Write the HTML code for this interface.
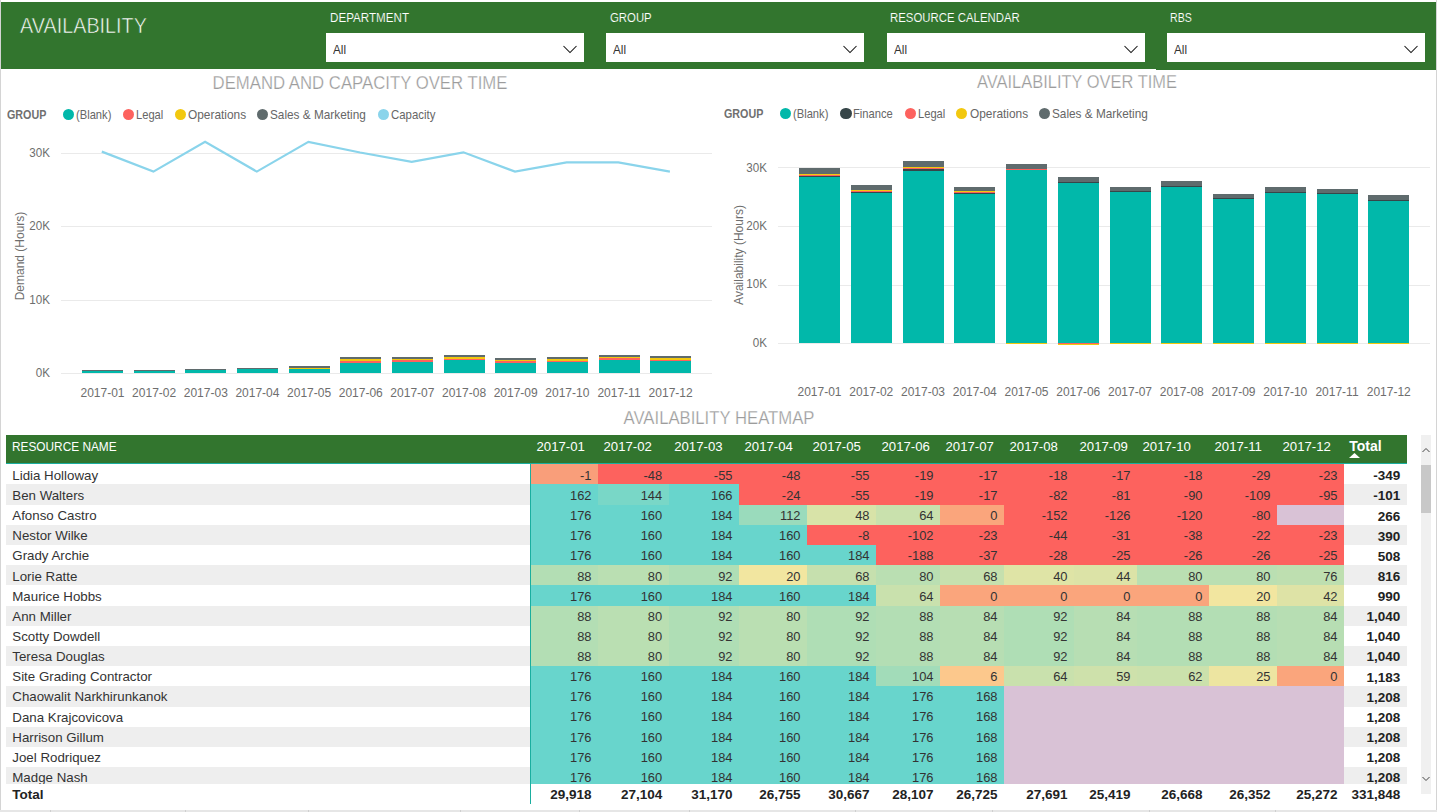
<!DOCTYPE html>
<html><head><meta charset="utf-8"><style>
html,body{margin:0;padding:0;}
body{width:1437px;height:812px;overflow:hidden;position:relative;background:#fff;font-family:"Liberation Sans", sans-serif;}
body div, body svg{position:absolute;white-space:nowrap;}
div div div{}
</style></head><body>
<div style="left:0px;top:0px;width:1px;height:812px;background:#D4D4D4;"></div>
<div style="left:1436px;top:0px;width:1px;height:812px;background:#D4D4D4;"></div>
<div style="left:0px;top:810px;width:1437px;height:2px;background:#E6E6E6;"></div>
<div style="left:49.5px;top:810px;width:1px;height:2px;background:#CFCFCF;"></div>
<div style="left:185px;top:810px;width:1px;height:2px;background:#CFCFCF;"></div>
<div style="left:308px;top:810px;width:1px;height:2px;background:#CFCFCF;"></div>
<div style="left:460px;top:810px;width:1px;height:2px;background:#CFCFCF;"></div>
<div style="left:578.5px;top:810px;width:1px;height:2px;background:#CFCFCF;"></div>
<div style="left:689px;top:810px;width:1px;height:2px;background:#CFCFCF;"></div>
<div style="left:855px;top:810px;width:1px;height:2px;background:#CFCFCF;"></div>
<div style="left:992px;top:810px;width:1px;height:2px;background:#CFCFCF;"></div>
<div style="left:1149px;top:810px;width:1px;height:2px;background:#CFCFCF;"></div>
<div style="left:1274.5px;top:810px;width:1px;height:2px;background:#CFCFCF;"></div>
<div style="left:1px;top:2px;width:1155px;height:67px;background:rgb(50,117,46);"></div>
<div style="left:1156px;top:2px;width:280px;height:68px;background:rgb(50,117,46);"></div>
<div style="top:14.67px;font-size:22.6px;line-height:22.6px;color:#fff;font-weight:normal;left:20px;transform:scaleX(0.8761);transform-origin:left top;-webkit-text-stroke:0.6px rgb(50,117,46);">AVAILABILITY</div>
<div style="top:11.74px;font-size:12px;line-height:12px;color:#fff;font-weight:normal;left:329.5px;transform:scaleX(0.9683);transform-origin:left top;-webkit-text-stroke:0.12px rgb(50,117,46);">DEPARTMENT</div>
<div style="left:326px;top:33px;width:258px;height:29px;background:#fff;"></div>
<div style="top:43.50px;font-size:12.4px;line-height:12.4px;color:#333;font-weight:normal;left:333px;transform:scaleX(0.9435);transform-origin:left top;">All</div>
<svg style="left:563px;top:45px" width="14" height="9"><polyline points="0.5,1 7,7.5 13.5,1" fill="none" stroke="#111" stroke-width="1.05"/></svg>
<div style="top:11.74px;font-size:12px;line-height:12px;color:#fff;font-weight:normal;left:609.6px;transform:scaleX(0.9475);transform-origin:left top;-webkit-text-stroke:0.12px rgb(50,117,46);">GROUP</div>
<div style="left:606px;top:33px;width:258px;height:29px;background:#fff;"></div>
<div style="top:43.50px;font-size:12.4px;line-height:12.4px;color:#333;font-weight:normal;left:613px;transform:scaleX(0.9435);transform-origin:left top;">All</div>
<svg style="left:843px;top:45px" width="14" height="9"><polyline points="0.5,1 7,7.5 13.5,1" fill="none" stroke="#111" stroke-width="1.05"/></svg>
<div style="top:11.74px;font-size:12px;line-height:12px;color:#fff;font-weight:normal;left:890px;transform:scaleX(0.9492);transform-origin:left top;-webkit-text-stroke:0.12px rgb(50,117,46);">RESOURCE CALENDAR</div>
<div style="left:887px;top:33px;width:258px;height:29px;background:#fff;"></div>
<div style="top:43.50px;font-size:12.4px;line-height:12.4px;color:#333;font-weight:normal;left:894px;transform:scaleX(0.9435);transform-origin:left top;">All</div>
<svg style="left:1124px;top:45px" width="14" height="9"><polyline points="0.5,1 7,7.5 13.5,1" fill="none" stroke="#111" stroke-width="1.05"/></svg>
<div style="top:11.74px;font-size:12px;line-height:12px;color:#fff;font-weight:normal;left:1170.4px;transform:scaleX(0.8833);transform-origin:left top;-webkit-text-stroke:0.12px rgb(50,117,46);">RBS</div>
<div style="left:1167px;top:33px;width:258px;height:29px;background:#fff;"></div>
<div style="top:43.50px;font-size:12.4px;line-height:12.4px;color:#333;font-weight:normal;left:1174px;transform:scaleX(0.9435);transform-origin:left top;">All</div>
<svg style="left:1404px;top:45px" width="14" height="9"><polyline points="0.5,1 7,7.5 13.5,1" fill="none" stroke="#111" stroke-width="1.05"/></svg>
<div style="top:74.02px;font-size:18.4px;line-height:18.4px;color:#9C9C9C;font-weight:normal;left:159.5px;width:400px;text-align:center;transform:scaleX(0.9103);transform-origin:center top;-webkit-text-stroke:0.25px #fff;">DEMAND AND CAPACITY OVER TIME</div>
<div style="top:108.50px;font-size:12.4px;line-height:12.4px;color:#707070;font-weight:bold;left:6.7px;transform:scaleX(0.8661);transform-origin:left top;">GROUP</div>
<div style="left:62.8px;top:109.3px;width:11.2px;height:11.2px;border-radius:50%;background:#01B8AA"></div>
<div style="top:108.90px;font-size:12.4px;line-height:12.4px;color:#666;font-weight:normal;left:75.8px;transform:scaleX(0.9016);transform-origin:left top;">(Blank)</div>
<div style="left:122.9px;top:109.3px;width:11.2px;height:11.2px;border-radius:50%;background:#FD625E"></div>
<div style="top:108.90px;font-size:12.4px;line-height:12.4px;color:#666;font-weight:normal;left:136px;transform:scaleX(0.9000);transform-origin:left top;">Legal</div>
<div style="left:174.7px;top:109.3px;width:11.2px;height:11.2px;border-radius:50%;background:#F2C80F"></div>
<div style="top:108.90px;font-size:12.4px;line-height:12.4px;color:#666;font-weight:normal;left:187.7px;transform:scaleX(0.9581);transform-origin:left top;">Operations</div>
<div style="left:257.2px;top:109.3px;width:11.2px;height:11.2px;border-radius:50%;background:#5F6B6D"></div>
<div style="top:108.90px;font-size:12.4px;line-height:12.4px;color:#666;font-weight:normal;left:270.2px;transform:scaleX(0.9524);transform-origin:left top;">Sales &amp; Marketing</div>
<div style="left:377.8px;top:109.3px;width:11.2px;height:11.2px;border-radius:50%;background:#8AD4EB"></div>
<div style="top:108.90px;font-size:12.4px;line-height:12.4px;color:#666;font-weight:normal;left:390.8px;transform:scaleX(0.9202);transform-origin:left top;">Capacity</div>
<div style="left:61px;top:153px;width:651px;height:1px;background:#EAEAEA;"></div>
<div style="top:147.42px;font-size:12.5px;line-height:12.5px;color:#6E6E6E;font-weight:normal;left:10px;width:40px;text-align:right;transform:scaleX(0.9300);transform-origin:right top;">30K</div>
<div style="left:61px;top:226px;width:651px;height:1px;background:#EAEAEA;"></div>
<div style="top:220.42px;font-size:12.5px;line-height:12.5px;color:#6E6E6E;font-weight:normal;left:10px;width:40px;text-align:right;transform:scaleX(0.9300);transform-origin:right top;">20K</div>
<div style="left:61px;top:300px;width:651px;height:1px;background:#EAEAEA;"></div>
<div style="top:293.82px;font-size:12.5px;line-height:12.5px;color:#6E6E6E;font-weight:normal;left:10px;width:40px;text-align:right;transform:scaleX(0.9300);transform-origin:right top;">10K</div>
<div style="left:61px;top:373px;width:651px;height:1px;background:#EAEAEA;"></div>
<div style="top:366.62px;font-size:12.5px;line-height:12.5px;color:#6E6E6E;font-weight:normal;left:10px;width:40px;text-align:right;transform:scaleX(0.9300);transform-origin:right top;">0K</div>
<div style="left:20px;top:256px;width:0;height:0"><div style="position:absolute;left:-60px;top:-7px;width:120px;text-align:center;font-size:12px;line-height:14px;color:#6E6E6E;transform:rotate(-90deg)">Demand (Hours)</div></div>
<div style="left:82.00px;top:370px;width:41px;height:1.00px;background:#5F6B6D;"></div>
<div style="left:82.00px;top:371px;width:41px;height:2.00px;background:#01B8AA;"></div>
<div style="top:386.54px;font-size:12px;line-height:12px;color:#6E6E6E;font-weight:normal;left:72.5px;width:60px;text-align:center;">2017-01</div>
<div style="left:133.65px;top:370px;width:41px;height:1.00px;background:#5F6B6D;"></div>
<div style="left:133.65px;top:371px;width:41px;height:2.00px;background:#01B8AA;"></div>
<div style="top:386.54px;font-size:12px;line-height:12px;color:#6E6E6E;font-weight:normal;left:124.15px;width:60px;text-align:center;">2017-02</div>
<div style="left:185.30px;top:369px;width:41px;height:1.00px;background:#5F6B6D;"></div>
<div style="left:185.30px;top:370px;width:41px;height:3.00px;background:#01B8AA;"></div>
<div style="top:386.54px;font-size:12px;line-height:12px;color:#6E6E6E;font-weight:normal;left:175.8px;width:60px;text-align:center;">2017-03</div>
<div style="left:236.95px;top:368px;width:41px;height:1.00px;background:#5F6B6D;"></div>
<div style="left:236.95px;top:369px;width:41px;height:4.00px;background:#01B8AA;"></div>
<div style="top:386.54px;font-size:12px;line-height:12px;color:#6E6E6E;font-weight:normal;left:227.45px;width:60px;text-align:center;">2017-04</div>
<div style="left:288.60px;top:366px;width:41px;height:1.70px;background:#5F6B6D;"></div>
<div style="left:288.60px;top:367.7px;width:41px;height:1.30px;background:#F2C80F;"></div>
<div style="left:288.60px;top:369px;width:41px;height:4.00px;background:#01B8AA;"></div>
<div style="top:386.54px;font-size:12px;line-height:12px;color:#6E6E6E;font-weight:normal;left:279.1px;width:60px;text-align:center;">2017-05</div>
<div style="left:340.25px;top:357px;width:41px;height:2.00px;background:#5F6B6D;"></div>
<div style="left:340.25px;top:359px;width:41px;height:2.00px;background:#F2C80F;"></div>
<div style="left:340.25px;top:361px;width:41px;height:2.00px;background:#FD625E;"></div>
<div style="left:340.25px;top:363px;width:41px;height:10.00px;background:#01B8AA;"></div>
<div style="top:386.54px;font-size:12px;line-height:12px;color:#6E6E6E;font-weight:normal;left:330.75px;width:60px;text-align:center;">2017-06</div>
<div style="left:391.90px;top:357px;width:41px;height:2.00px;background:#5F6B6D;"></div>
<div style="left:391.90px;top:359px;width:41px;height:1.00px;background:#F2C80F;"></div>
<div style="left:391.90px;top:360px;width:41px;height:2.00px;background:#FD625E;"></div>
<div style="left:391.90px;top:362px;width:41px;height:11.00px;background:#01B8AA;"></div>
<div style="top:386.54px;font-size:12px;line-height:12px;color:#6E6E6E;font-weight:normal;left:382.4px;width:60px;text-align:center;">2017-07</div>
<div style="left:443.55px;top:355px;width:41px;height:2.00px;background:#5F6B6D;"></div>
<div style="left:443.55px;top:357px;width:41px;height:2.00px;background:#F2C80F;"></div>
<div style="left:443.55px;top:359px;width:41px;height:1.00px;background:#FD625E;"></div>
<div style="left:443.55px;top:360px;width:41px;height:13.00px;background:#01B8AA;"></div>
<div style="top:386.54px;font-size:12px;line-height:12px;color:#6E6E6E;font-weight:normal;left:434.05px;width:60px;text-align:center;">2017-08</div>
<div style="left:495.20px;top:358px;width:41px;height:2.00px;background:#5F6B6D;"></div>
<div style="left:495.20px;top:360px;width:41px;height:1.00px;background:#F2C80F;"></div>
<div style="left:495.20px;top:361px;width:41px;height:2.00px;background:#FD625E;"></div>
<div style="left:495.20px;top:363px;width:41px;height:10.00px;background:#01B8AA;"></div>
<div style="top:386.54px;font-size:12px;line-height:12px;color:#6E6E6E;font-weight:normal;left:485.70000000000005px;width:60px;text-align:center;">2017-09</div>
<div style="left:546.85px;top:357px;width:41px;height:2.00px;background:#5F6B6D;"></div>
<div style="left:546.85px;top:359px;width:41px;height:2.00px;background:#F2C80F;"></div>
<div style="left:546.85px;top:361px;width:41px;height:1.00px;background:#FD625E;"></div>
<div style="left:546.85px;top:362px;width:41px;height:11.00px;background:#01B8AA;"></div>
<div style="top:386.54px;font-size:12px;line-height:12px;color:#6E6E6E;font-weight:normal;left:537.3499999999999px;width:60px;text-align:center;">2017-10</div>
<div style="left:598.50px;top:355px;width:41px;height:2.00px;background:#5F6B6D;"></div>
<div style="left:598.50px;top:357px;width:41px;height:1.00px;background:#F2C80F;"></div>
<div style="left:598.50px;top:358px;width:41px;height:2.00px;background:#FD625E;"></div>
<div style="left:598.50px;top:360px;width:41px;height:13.00px;background:#01B8AA;"></div>
<div style="top:386.54px;font-size:12px;line-height:12px;color:#6E6E6E;font-weight:normal;left:589.0px;width:60px;text-align:center;">2017-11</div>
<div style="left:650.15px;top:356px;width:41px;height:2.00px;background:#5F6B6D;"></div>
<div style="left:650.15px;top:358px;width:41px;height:2.00px;background:#F2C80F;"></div>
<div style="left:650.15px;top:360px;width:41px;height:1.00px;background:#FD625E;"></div>
<div style="left:650.15px;top:361px;width:41px;height:12.00px;background:#01B8AA;"></div>
<div style="top:386.54px;font-size:12px;line-height:12px;color:#6E6E6E;font-weight:normal;left:640.65px;width:60px;text-align:center;">2017-12</div>
<svg style="left:0;top:0" width="720" height="400"><polyline points="101.8,151.6 153.4,171.6 205.1,141.8 256.8,171.6 308.4,141.8 360.1,152.5 411.7,161.8 463.4,152.3 515.0,171.6 566.6,162.3 618.3,162.3 669.9,171.6" fill="none" stroke="#8AD4EB" stroke-width="2.2" stroke-linejoin="miter"/></svg>
<div style="top:73.39px;font-size:18.2px;line-height:18.2px;color:#9C9C9C;font-weight:normal;left:877.3px;width:400px;text-align:center;transform:scaleX(0.9044);transform-origin:center top;-webkit-text-stroke:0.25px #fff;">AVAILABILITY OVER TIME</div>
<div style="top:108.00px;font-size:12.4px;line-height:12.4px;color:#707070;font-weight:bold;left:723.8px;transform:scaleX(0.8661);transform-origin:left top;">GROUP</div>
<div style="left:780.3px;top:108.3px;width:11.2px;height:11.2px;border-radius:50%;background:#01B8AA"></div>
<div style="top:107.90px;font-size:12.4px;line-height:12.4px;color:#666;font-weight:normal;left:793.3px;transform:scaleX(0.9016);transform-origin:left top;">(Blank)</div>
<div style="left:840.4px;top:108.3px;width:11.2px;height:11.2px;border-radius:50%;background:#374649"></div>
<div style="top:107.90px;font-size:12.4px;line-height:12.4px;color:#666;font-weight:normal;left:853.4px;transform:scaleX(0.9024);transform-origin:left top;">Finance</div>
<div style="left:904.5px;top:108.3px;width:11.2px;height:11.2px;border-radius:50%;background:#FD625E"></div>
<div style="top:107.90px;font-size:12.4px;line-height:12.4px;color:#666;font-weight:normal;left:917.5px;transform:scaleX(0.9000);transform-origin:left top;">Legal</div>
<div style="left:955.6px;top:108.3px;width:11.2px;height:11.2px;border-radius:50%;background:#F2C80F"></div>
<div style="top:107.90px;font-size:12.4px;line-height:12.4px;color:#666;font-weight:normal;left:970px;transform:scaleX(0.9581);transform-origin:left top;">Operations</div>
<div style="left:1039px;top:108.3px;width:11.2px;height:11.2px;border-radius:50%;background:#5F6B6D"></div>
<div style="top:107.90px;font-size:12.4px;line-height:12.4px;color:#666;font-weight:normal;left:1052px;transform:scaleX(0.9524);transform-origin:left top;">Sales &amp; Marketing</div>
<div style="left:778px;top:167px;width:652px;height:1px;background:#EAEAEA;"></div>
<div style="top:161.62px;font-size:12.5px;line-height:12.5px;color:#6E6E6E;font-weight:normal;left:726.7px;width:40px;text-align:right;transform:scaleX(0.9300);transform-origin:right top;">30K</div>
<div style="left:778px;top:226px;width:652px;height:1px;background:#EAEAEA;"></div>
<div style="top:219.52px;font-size:12.5px;line-height:12.5px;color:#6E6E6E;font-weight:normal;left:726.7px;width:40px;text-align:right;transform:scaleX(0.9300);transform-origin:right top;">20K</div>
<div style="left:778px;top:285px;width:652px;height:1px;background:#EAEAEA;"></div>
<div style="top:278.32px;font-size:12.5px;line-height:12.5px;color:#6E6E6E;font-weight:normal;left:726.7px;width:40px;text-align:right;transform:scaleX(0.9300);transform-origin:right top;">10K</div>
<div style="left:778px;top:343px;width:652px;height:1px;background:#EAEAEA;"></div>
<div style="top:337.12px;font-size:12.5px;line-height:12.5px;color:#6E6E6E;font-weight:normal;left:726.7px;width:40px;text-align:right;transform:scaleX(0.9300);transform-origin:right top;">0K</div>
<div style="left:738.5px;top:255px;width:0;height:0"><div style="position:absolute;left:-70px;top:-7px;width:140px;text-align:center;font-size:12px;line-height:14px;color:#6E6E6E;transform:rotate(-90deg)">Availability (Hours)</div></div>
<div style="left:799.00px;top:168px;width:41px;height:5.70px;background:#5F6B6D;"></div>
<div style="left:799.00px;top:173.7px;width:41px;height:1.30px;background:#F2C80F;"></div>
<div style="left:799.00px;top:175px;width:41px;height:1.00px;background:#FD625E;"></div>
<div style="left:799.00px;top:176px;width:41px;height:1.00px;background:#374649;"></div>
<div style="left:799.00px;top:177px;width:41px;height:166.00px;background:#01B8AA;"></div>
<div style="top:385.84px;font-size:12px;line-height:12px;color:#6E6E6E;font-weight:normal;left:789.5px;width:60px;text-align:center;">2017-01</div>
<div style="left:850.75px;top:185px;width:41px;height:4.80px;background:#5F6B6D;"></div>
<div style="left:850.75px;top:189.8px;width:41px;height:1.20px;background:#F2C80F;"></div>
<div style="left:850.75px;top:191px;width:41px;height:1.00px;background:#FD625E;"></div>
<div style="left:850.75px;top:192px;width:41px;height:1.00px;background:#374649;"></div>
<div style="left:850.75px;top:193px;width:41px;height:150.00px;background:#01B8AA;"></div>
<div style="top:385.84px;font-size:12px;line-height:12px;color:#6E6E6E;font-weight:normal;left:841.25px;width:60px;text-align:center;">2017-02</div>
<div style="left:902.50px;top:161px;width:41px;height:5.80px;background:#5F6B6D;"></div>
<div style="left:902.50px;top:166.8px;width:41px;height:1.20px;background:#F2C80F;"></div>
<div style="left:902.50px;top:168px;width:41px;height:1.00px;background:#FD625E;"></div>
<div style="left:902.50px;top:169px;width:41px;height:2.00px;background:#374649;"></div>
<div style="left:902.50px;top:171px;width:41px;height:172.00px;background:#01B8AA;"></div>
<div style="top:385.84px;font-size:12px;line-height:12px;color:#6E6E6E;font-weight:normal;left:893.0px;width:60px;text-align:center;">2017-03</div>
<div style="left:954.25px;top:187px;width:41px;height:3.60px;background:#5F6B6D;"></div>
<div style="left:954.25px;top:190.6px;width:41px;height:1.20px;background:#F2C80F;"></div>
<div style="left:954.25px;top:191.8px;width:41px;height:1.20px;background:#FD625E;"></div>
<div style="left:954.25px;top:193px;width:41px;height:1.00px;background:#374649;"></div>
<div style="left:954.25px;top:194px;width:41px;height:149.00px;background:#01B8AA;"></div>
<div style="top:385.84px;font-size:12px;line-height:12px;color:#6E6E6E;font-weight:normal;left:944.75px;width:60px;text-align:center;">2017-04</div>
<div style="left:1006.00px;top:164px;width:41px;height:5.00px;background:#5F6B6D;"></div>
<div style="left:1006.00px;top:169px;width:41px;height:1.00px;background:#FD625E;"></div>
<div style="left:1006.00px;top:170px;width:41px;height:173.00px;background:#01B8AA;"></div>
<div style="left:1006.00px;top:343px;width:41px;height:1.00px;background:#F2C80F;"></div>
<div style="top:385.84px;font-size:12px;line-height:12px;color:#6E6E6E;font-weight:normal;left:996.5px;width:60px;text-align:center;">2017-05</div>
<div style="left:1057.75px;top:177px;width:41px;height:5.20px;background:#5F6B6D;"></div>
<div style="left:1057.75px;top:182.2px;width:41px;height:0.80px;background:#374649;"></div>
<div style="left:1057.75px;top:183px;width:41px;height:160.00px;background:#01B8AA;"></div>
<div style="left:1057.75px;top:343px;width:41px;height:1.00px;background:#FD625E;"></div>
<div style="left:1057.75px;top:344px;width:41px;height:1.00px;background:#F2C80F;"></div>
<div style="top:385.84px;font-size:12px;line-height:12px;color:#6E6E6E;font-weight:normal;left:1048.25px;width:60px;text-align:center;">2017-06</div>
<div style="left:1109.50px;top:187px;width:41px;height:4.00px;background:#5F6B6D;"></div>
<div style="left:1109.50px;top:191px;width:41px;height:1.00px;background:#374649;"></div>
<div style="left:1109.50px;top:192px;width:41px;height:151.00px;background:#01B8AA;"></div>
<div style="left:1109.50px;top:343px;width:41px;height:1.00px;background:#F2C80F;"></div>
<div style="top:385.84px;font-size:12px;line-height:12px;color:#6E6E6E;font-weight:normal;left:1100.0px;width:60px;text-align:center;">2017-07</div>
<div style="left:1161.25px;top:181px;width:41px;height:5.00px;background:#5F6B6D;"></div>
<div style="left:1161.25px;top:186px;width:41px;height:1.00px;background:#374649;"></div>
<div style="left:1161.25px;top:187px;width:41px;height:156.00px;background:#01B8AA;"></div>
<div style="left:1161.25px;top:343px;width:41px;height:1.00px;background:#F2C80F;"></div>
<div style="top:385.84px;font-size:12px;line-height:12px;color:#6E6E6E;font-weight:normal;left:1151.75px;width:60px;text-align:center;">2017-08</div>
<div style="left:1213.00px;top:194px;width:41px;height:4.00px;background:#5F6B6D;"></div>
<div style="left:1213.00px;top:198px;width:41px;height:1.00px;background:#374649;"></div>
<div style="left:1213.00px;top:199px;width:41px;height:144.00px;background:#01B8AA;"></div>
<div style="left:1213.00px;top:343px;width:41px;height:1.00px;background:#F2C80F;"></div>
<div style="top:385.84px;font-size:12px;line-height:12px;color:#6E6E6E;font-weight:normal;left:1203.5px;width:60px;text-align:center;">2017-09</div>
<div style="left:1264.75px;top:187px;width:41px;height:5.00px;background:#5F6B6D;"></div>
<div style="left:1264.75px;top:192px;width:41px;height:1.00px;background:#374649;"></div>
<div style="left:1264.75px;top:193px;width:41px;height:150.00px;background:#01B8AA;"></div>
<div style="left:1264.75px;top:343px;width:41px;height:1.00px;background:#F2C80F;"></div>
<div style="top:385.84px;font-size:12px;line-height:12px;color:#6E6E6E;font-weight:normal;left:1255.25px;width:60px;text-align:center;">2017-10</div>
<div style="left:1316.50px;top:189px;width:41px;height:4.00px;background:#5F6B6D;"></div>
<div style="left:1316.50px;top:193px;width:41px;height:1.00px;background:#374649;"></div>
<div style="left:1316.50px;top:194px;width:41px;height:149.00px;background:#01B8AA;"></div>
<div style="left:1316.50px;top:343px;width:41px;height:1.00px;background:#F2C80F;"></div>
<div style="top:385.84px;font-size:12px;line-height:12px;color:#6E6E6E;font-weight:normal;left:1307.0px;width:60px;text-align:center;">2017-11</div>
<div style="left:1368.25px;top:195px;width:41px;height:5.00px;background:#5F6B6D;"></div>
<div style="left:1368.25px;top:200px;width:41px;height:1.00px;background:#374649;"></div>
<div style="left:1368.25px;top:201px;width:41px;height:142.00px;background:#01B8AA;"></div>
<div style="left:1368.25px;top:343px;width:41px;height:1.00px;background:#F2C80F;"></div>
<div style="top:385.84px;font-size:12px;line-height:12px;color:#6E6E6E;font-weight:normal;left:1358.75px;width:60px;text-align:center;">2017-12</div>
<div style="top:410.15px;font-size:17.9px;line-height:17.9px;color:#9C9C9C;font-weight:normal;left:518.5px;width:400px;text-align:center;transform:scaleX(0.9335);transform-origin:center top;-webkit-text-stroke:0.25px #fff;">AVAILABILITY HEATMAP</div>
<div style="left:6px;top:435px;width:1401px;height:28px;background:rgb(50,117,46);"></div>
<div style="left:6px;top:463px;width:1401px;height:1px;background:#1AAE9F;"></div>
<div style="top:441.27px;font-size:12.2px;line-height:12.2px;color:#fff;font-weight:normal;left:12.3px;transform:scaleX(0.9713);transform-origin:left top;">RESOURCE NAME</div>
<div style="top:439.63px;font-size:13.19px;line-height:13.19px;color:#fff;font-weight:normal;left:536.5px;">2017-01</div>
<div style="top:439.63px;font-size:13.19px;line-height:13.19px;color:#fff;font-weight:normal;left:603.5px;">2017-02</div>
<div style="top:439.63px;font-size:13.19px;line-height:13.19px;color:#fff;font-weight:normal;left:674.2px;">2017-03</div>
<div style="top:439.63px;font-size:13.19px;line-height:13.19px;color:#fff;font-weight:normal;left:744.5px;">2017-04</div>
<div style="top:439.63px;font-size:13.19px;line-height:13.19px;color:#fff;font-weight:normal;left:812.5px;">2017-05</div>
<div style="top:439.63px;font-size:13.19px;line-height:13.19px;color:#fff;font-weight:normal;left:881.5px;">2017-06</div>
<div style="top:439.63px;font-size:13.19px;line-height:13.19px;color:#fff;font-weight:normal;left:945.5px;">2017-07</div>
<div style="top:439.63px;font-size:13.19px;line-height:13.19px;color:#fff;font-weight:normal;left:1009.5px;">2017-08</div>
<div style="top:439.63px;font-size:13.19px;line-height:13.19px;color:#fff;font-weight:normal;left:1079.5px;">2017-09</div>
<div style="top:439.63px;font-size:13.19px;line-height:13.19px;color:#fff;font-weight:normal;left:1142.5px;">2017-10</div>
<div style="top:439.63px;font-size:13.19px;line-height:13.19px;color:#fff;font-weight:normal;left:1214.5px;">2017-11</div>
<div style="top:439.63px;font-size:13.19px;line-height:13.19px;color:#fff;font-weight:normal;left:1282.5px;">2017-12</div>
<div style="top:438.95px;font-size:14px;line-height:14px;color:#fff;font-weight:bold;left:1349.2px;">Total</div>
<svg style="left:1349px;top:453px" width="11" height="5"><polygon points="0,5 5.5,0 11,5" fill="#fff"/></svg>
<div style="left:0;top:464px;width:1437px;height:320px;overflow:hidden">
<div style="left:6px;top:0px;width:525px;height:20px;background:#fff;"></div>
<div style="left:1344px;top:0px;width:63px;height:20px;background:#fff;"></div>
<div style="top:4.94px;font-size:13.3px;line-height:13.3px;color:#333;font-weight:normal;left:12.3px;">Lidia Holloway</div>
<div style="left:531.00px;top:0px;width:67.00px;height:20px;background:rgb(249, 158, 122);"></div>
<div style="top:5.88px;font-size:12.9px;line-height:12.9px;color:#333;font-weight:normal;left:531.5px;width:60px;text-align:right;">-1</div>
<div style="left:598.00px;top:0px;width:70.70px;height:20px;background:rgb(253, 98, 94);"></div>
<div style="top:5.88px;font-size:12.9px;line-height:12.9px;color:#333;font-weight:normal;left:602.2px;width:60px;text-align:right;">-48</div>
<div style="left:668.70px;top:0px;width:70.30px;height:20px;background:rgb(253, 98, 94);"></div>
<div style="top:5.88px;font-size:12.9px;line-height:12.9px;color:#333;font-weight:normal;left:672.5px;width:60px;text-align:right;">-55</div>
<div style="left:739.00px;top:0px;width:68.00px;height:20px;background:rgb(253, 98, 94);"></div>
<div style="top:5.88px;font-size:12.9px;line-height:12.9px;color:#333;font-weight:normal;left:740.5px;width:60px;text-align:right;">-48</div>
<div style="left:807.00px;top:0px;width:69.00px;height:20px;background:rgb(253, 98, 94);"></div>
<div style="top:5.88px;font-size:12.9px;line-height:12.9px;color:#333;font-weight:normal;left:809.5px;width:60px;text-align:right;">-55</div>
<div style="left:876.00px;top:0px;width:64.00px;height:20px;background:rgb(253, 98, 94);"></div>
<div style="top:5.88px;font-size:12.9px;line-height:12.9px;color:#333;font-weight:normal;left:873.5px;width:60px;text-align:right;">-19</div>
<div style="left:940.00px;top:0px;width:64.00px;height:20px;background:rgb(253, 98, 94);"></div>
<div style="top:5.88px;font-size:12.9px;line-height:12.9px;color:#333;font-weight:normal;left:937.5px;width:60px;text-align:right;">-17</div>
<div style="left:1004.00px;top:0px;width:70.00px;height:20px;background:rgb(253, 98, 94);"></div>
<div style="top:5.88px;font-size:12.9px;line-height:12.9px;color:#333;font-weight:normal;left:1007.5px;width:60px;text-align:right;">-18</div>
<div style="left:1074.00px;top:0px;width:63.00px;height:20px;background:rgb(253, 98, 94);"></div>
<div style="top:5.88px;font-size:12.9px;line-height:12.9px;color:#333;font-weight:normal;left:1070.5px;width:60px;text-align:right;">-17</div>
<div style="left:1137.00px;top:0px;width:72.00px;height:20px;background:rgb(253, 98, 94);"></div>
<div style="top:5.88px;font-size:12.9px;line-height:12.9px;color:#333;font-weight:normal;left:1142.5px;width:60px;text-align:right;">-18</div>
<div style="left:1209.00px;top:0px;width:68.00px;height:20px;background:rgb(253, 98, 94);"></div>
<div style="top:5.88px;font-size:12.9px;line-height:12.9px;color:#333;font-weight:normal;left:1210.5px;width:60px;text-align:right;">-29</div>
<div style="left:1277.00px;top:0px;width:67.00px;height:20px;background:rgb(253, 98, 94);"></div>
<div style="top:5.88px;font-size:12.9px;line-height:12.9px;color:#333;font-weight:normal;left:1277.5px;width:60px;text-align:right;">-23</div>
<div style="top:5.27px;font-size:13.5px;line-height:13.5px;color:#222;font-weight:bold;left:1340.2px;width:60px;text-align:right;">-349</div>
<div style="left:6px;top:20px;width:525px;height:21px;background:#EEEEEE;"></div>
<div style="left:1344px;top:20px;width:63px;height:21px;background:#EEEEEE;"></div>
<div style="top:25.07px;font-size:13.3px;line-height:13.3px;color:#333;font-weight:normal;left:12.3px;">Ben Walters</div>
<div style="left:531.00px;top:20px;width:67.00px;height:21px;background:rgb(104, 213, 204);"></div>
<div style="top:26.01px;font-size:12.9px;line-height:12.9px;color:#333;font-weight:normal;left:531.5px;width:60px;text-align:right;">162</div>
<div style="left:598.00px;top:20px;width:70.70px;height:21px;background:rgb(121, 215, 199);"></div>
<div style="top:26.01px;font-size:12.9px;line-height:12.9px;color:#333;font-weight:normal;left:602.2px;width:60px;text-align:right;">144</div>
<div style="left:668.70px;top:20px;width:70.30px;height:21px;background:rgb(104, 213, 204);"></div>
<div style="top:26.01px;font-size:12.9px;line-height:12.9px;color:#333;font-weight:normal;left:672.5px;width:60px;text-align:right;">166</div>
<div style="left:739.00px;top:20px;width:68.00px;height:21px;background:rgb(253, 98, 94);"></div>
<div style="top:26.01px;font-size:12.9px;line-height:12.9px;color:#333;font-weight:normal;left:740.5px;width:60px;text-align:right;">-24</div>
<div style="left:807.00px;top:20px;width:69.00px;height:21px;background:rgb(253, 98, 94);"></div>
<div style="top:26.01px;font-size:12.9px;line-height:12.9px;color:#333;font-weight:normal;left:809.5px;width:60px;text-align:right;">-55</div>
<div style="left:876.00px;top:20px;width:64.00px;height:21px;background:rgb(253, 98, 94);"></div>
<div style="top:26.01px;font-size:12.9px;line-height:12.9px;color:#333;font-weight:normal;left:873.5px;width:60px;text-align:right;">-19</div>
<div style="left:940.00px;top:20px;width:64.00px;height:21px;background:rgb(253, 98, 94);"></div>
<div style="top:26.01px;font-size:12.9px;line-height:12.9px;color:#333;font-weight:normal;left:937.5px;width:60px;text-align:right;">-17</div>
<div style="left:1004.00px;top:20px;width:70.00px;height:21px;background:rgb(253, 98, 94);"></div>
<div style="top:26.01px;font-size:12.9px;line-height:12.9px;color:#333;font-weight:normal;left:1007.5px;width:60px;text-align:right;">-82</div>
<div style="left:1074.00px;top:20px;width:63.00px;height:21px;background:rgb(253, 98, 94);"></div>
<div style="top:26.01px;font-size:12.9px;line-height:12.9px;color:#333;font-weight:normal;left:1070.5px;width:60px;text-align:right;">-81</div>
<div style="left:1137.00px;top:20px;width:72.00px;height:21px;background:rgb(253, 98, 94);"></div>
<div style="top:26.01px;font-size:12.9px;line-height:12.9px;color:#333;font-weight:normal;left:1142.5px;width:60px;text-align:right;">-90</div>
<div style="left:1209.00px;top:20px;width:68.00px;height:21px;background:rgb(253, 98, 94);"></div>
<div style="top:26.01px;font-size:12.9px;line-height:12.9px;color:#333;font-weight:normal;left:1210.5px;width:60px;text-align:right;">-109</div>
<div style="left:1277.00px;top:20px;width:67.00px;height:21px;background:rgb(253, 98, 94);"></div>
<div style="top:26.01px;font-size:12.9px;line-height:12.9px;color:#333;font-weight:normal;left:1277.5px;width:60px;text-align:right;">-95</div>
<div style="top:25.40px;font-size:13.5px;line-height:13.5px;color:#222;font-weight:bold;left:1340.2px;width:60px;text-align:right;">-101</div>
<div style="left:6px;top:41px;width:525px;height:20px;background:#fff;"></div>
<div style="left:1344px;top:41px;width:63px;height:20px;background:#fff;"></div>
<div style="top:45.20px;font-size:13.3px;line-height:13.3px;color:#333;font-weight:normal;left:12.3px;">Afonso Castro</div>
<div style="left:531.00px;top:41px;width:67.00px;height:20px;background:rgb(104, 213, 204);"></div>
<div style="top:46.14px;font-size:12.9px;line-height:12.9px;color:#333;font-weight:normal;left:531.5px;width:60px;text-align:right;">176</div>
<div style="left:598.00px;top:41px;width:70.70px;height:20px;background:rgb(104, 213, 204);"></div>
<div style="top:46.14px;font-size:12.9px;line-height:12.9px;color:#333;font-weight:normal;left:602.2px;width:60px;text-align:right;">160</div>
<div style="left:668.70px;top:41px;width:70.30px;height:20px;background:rgb(104, 213, 204);"></div>
<div style="top:46.14px;font-size:12.9px;line-height:12.9px;color:#333;font-weight:normal;left:672.5px;width:60px;text-align:right;">184</div>
<div style="left:739.00px;top:41px;width:68.00px;height:20px;background:rgb(154, 219, 188);"></div>
<div style="top:46.14px;font-size:12.9px;line-height:12.9px;color:#333;font-weight:normal;left:740.5px;width:60px;text-align:right;">112</div>
<div style="left:807.00px;top:41px;width:69.00px;height:20px;background:rgb(216, 227, 168);"></div>
<div style="top:46.14px;font-size:12.9px;line-height:12.9px;color:#333;font-weight:normal;left:809.5px;width:60px;text-align:right;">48</div>
<div style="left:876.00px;top:41px;width:64.00px;height:20px;background:rgb(201, 225, 173);"></div>
<div style="top:46.14px;font-size:12.9px;line-height:12.9px;color:#333;font-weight:normal;left:873.5px;width:60px;text-align:right;">64</div>
<div style="left:940.00px;top:41px;width:64.00px;height:20px;background:rgb(250, 165, 124);"></div>
<div style="top:46.14px;font-size:12.9px;line-height:12.9px;color:#333;font-weight:normal;left:937.5px;width:60px;text-align:right;">0</div>
<div style="left:1004.00px;top:41px;width:70.00px;height:20px;background:rgb(253, 98, 94);"></div>
<div style="top:46.14px;font-size:12.9px;line-height:12.9px;color:#333;font-weight:normal;left:1007.5px;width:60px;text-align:right;">-152</div>
<div style="left:1074.00px;top:41px;width:63.00px;height:20px;background:rgb(253, 98, 94);"></div>
<div style="top:46.14px;font-size:12.9px;line-height:12.9px;color:#333;font-weight:normal;left:1070.5px;width:60px;text-align:right;">-126</div>
<div style="left:1137.00px;top:41px;width:72.00px;height:20px;background:rgb(253, 98, 94);"></div>
<div style="top:46.14px;font-size:12.9px;line-height:12.9px;color:#333;font-weight:normal;left:1142.5px;width:60px;text-align:right;">-120</div>
<div style="left:1209.00px;top:41px;width:68.00px;height:20px;background:rgb(253, 98, 94);"></div>
<div style="top:46.14px;font-size:12.9px;line-height:12.9px;color:#333;font-weight:normal;left:1210.5px;width:60px;text-align:right;">-80</div>
<div style="left:1277.00px;top:41px;width:67.00px;height:20px;background:rgb(217, 194, 214);"></div>
<div style="top:45.53px;font-size:13.5px;line-height:13.5px;color:#222;font-weight:bold;left:1340.2px;width:60px;text-align:right;">266</div>
<div style="left:6px;top:61px;width:525px;height:20px;background:#EEEEEE;"></div>
<div style="left:1344px;top:61px;width:63px;height:20px;background:#EEEEEE;"></div>
<div style="top:65.33px;font-size:13.3px;line-height:13.3px;color:#333;font-weight:normal;left:12.3px;">Nestor Wilke</div>
<div style="left:531.00px;top:61px;width:67.00px;height:20px;background:rgb(104, 213, 204);"></div>
<div style="top:66.27px;font-size:12.9px;line-height:12.9px;color:#333;font-weight:normal;left:531.5px;width:60px;text-align:right;">176</div>
<div style="left:598.00px;top:61px;width:70.70px;height:20px;background:rgb(104, 213, 204);"></div>
<div style="top:66.27px;font-size:12.9px;line-height:12.9px;color:#333;font-weight:normal;left:602.2px;width:60px;text-align:right;">160</div>
<div style="left:668.70px;top:61px;width:70.30px;height:20px;background:rgb(104, 213, 204);"></div>
<div style="top:66.27px;font-size:12.9px;line-height:12.9px;color:#333;font-weight:normal;left:672.5px;width:60px;text-align:right;">184</div>
<div style="left:739.00px;top:61px;width:68.00px;height:20px;background:rgb(104, 213, 204);"></div>
<div style="top:66.27px;font-size:12.9px;line-height:12.9px;color:#333;font-weight:normal;left:740.5px;width:60px;text-align:right;">160</div>
<div style="left:807.00px;top:61px;width:69.00px;height:20px;background:rgb(253, 98, 94);"></div>
<div style="top:66.27px;font-size:12.9px;line-height:12.9px;color:#333;font-weight:normal;left:809.5px;width:60px;text-align:right;">-8</div>
<div style="left:876.00px;top:61px;width:64.00px;height:20px;background:rgb(253, 98, 94);"></div>
<div style="top:66.27px;font-size:12.9px;line-height:12.9px;color:#333;font-weight:normal;left:873.5px;width:60px;text-align:right;">-102</div>
<div style="left:940.00px;top:61px;width:64.00px;height:20px;background:rgb(253, 98, 94);"></div>
<div style="top:66.27px;font-size:12.9px;line-height:12.9px;color:#333;font-weight:normal;left:937.5px;width:60px;text-align:right;">-23</div>
<div style="left:1004.00px;top:61px;width:70.00px;height:20px;background:rgb(253, 98, 94);"></div>
<div style="top:66.27px;font-size:12.9px;line-height:12.9px;color:#333;font-weight:normal;left:1007.5px;width:60px;text-align:right;">-44</div>
<div style="left:1074.00px;top:61px;width:63.00px;height:20px;background:rgb(253, 98, 94);"></div>
<div style="top:66.27px;font-size:12.9px;line-height:12.9px;color:#333;font-weight:normal;left:1070.5px;width:60px;text-align:right;">-31</div>
<div style="left:1137.00px;top:61px;width:72.00px;height:20px;background:rgb(253, 98, 94);"></div>
<div style="top:66.27px;font-size:12.9px;line-height:12.9px;color:#333;font-weight:normal;left:1142.5px;width:60px;text-align:right;">-38</div>
<div style="left:1209.00px;top:61px;width:68.00px;height:20px;background:rgb(253, 98, 94);"></div>
<div style="top:66.27px;font-size:12.9px;line-height:12.9px;color:#333;font-weight:normal;left:1210.5px;width:60px;text-align:right;">-22</div>
<div style="left:1277.00px;top:61px;width:67.00px;height:20px;background:rgb(253, 98, 94);"></div>
<div style="top:66.27px;font-size:12.9px;line-height:12.9px;color:#333;font-weight:normal;left:1277.5px;width:60px;text-align:right;">-23</div>
<div style="top:65.66px;font-size:13.5px;line-height:13.5px;color:#222;font-weight:bold;left:1340.2px;width:60px;text-align:right;">390</div>
<div style="left:6px;top:81px;width:525px;height:20px;background:#fff;"></div>
<div style="left:1344px;top:81px;width:63px;height:20px;background:#fff;"></div>
<div style="top:85.46px;font-size:13.3px;line-height:13.3px;color:#333;font-weight:normal;left:12.3px;">Grady Archie</div>
<div style="left:531.00px;top:81px;width:67.00px;height:20px;background:rgb(104, 213, 204);"></div>
<div style="top:86.40px;font-size:12.9px;line-height:12.9px;color:#333;font-weight:normal;left:531.5px;width:60px;text-align:right;">176</div>
<div style="left:598.00px;top:81px;width:70.70px;height:20px;background:rgb(104, 213, 204);"></div>
<div style="top:86.40px;font-size:12.9px;line-height:12.9px;color:#333;font-weight:normal;left:602.2px;width:60px;text-align:right;">160</div>
<div style="left:668.70px;top:81px;width:70.30px;height:20px;background:rgb(104, 213, 204);"></div>
<div style="top:86.40px;font-size:12.9px;line-height:12.9px;color:#333;font-weight:normal;left:672.5px;width:60px;text-align:right;">184</div>
<div style="left:739.00px;top:81px;width:68.00px;height:20px;background:rgb(104, 213, 204);"></div>
<div style="top:86.40px;font-size:12.9px;line-height:12.9px;color:#333;font-weight:normal;left:740.5px;width:60px;text-align:right;">160</div>
<div style="left:807.00px;top:81px;width:69.00px;height:20px;background:rgb(104, 213, 204);"></div>
<div style="top:86.40px;font-size:12.9px;line-height:12.9px;color:#333;font-weight:normal;left:809.5px;width:60px;text-align:right;">184</div>
<div style="left:876.00px;top:81px;width:64.00px;height:20px;background:rgb(253, 98, 94);"></div>
<div style="top:86.40px;font-size:12.9px;line-height:12.9px;color:#333;font-weight:normal;left:873.5px;width:60px;text-align:right;">-188</div>
<div style="left:940.00px;top:81px;width:64.00px;height:20px;background:rgb(253, 98, 94);"></div>
<div style="top:86.40px;font-size:12.9px;line-height:12.9px;color:#333;font-weight:normal;left:937.5px;width:60px;text-align:right;">-37</div>
<div style="left:1004.00px;top:81px;width:70.00px;height:20px;background:rgb(253, 98, 94);"></div>
<div style="top:86.40px;font-size:12.9px;line-height:12.9px;color:#333;font-weight:normal;left:1007.5px;width:60px;text-align:right;">-28</div>
<div style="left:1074.00px;top:81px;width:63.00px;height:20px;background:rgb(253, 98, 94);"></div>
<div style="top:86.40px;font-size:12.9px;line-height:12.9px;color:#333;font-weight:normal;left:1070.5px;width:60px;text-align:right;">-25</div>
<div style="left:1137.00px;top:81px;width:72.00px;height:20px;background:rgb(253, 98, 94);"></div>
<div style="top:86.40px;font-size:12.9px;line-height:12.9px;color:#333;font-weight:normal;left:1142.5px;width:60px;text-align:right;">-26</div>
<div style="left:1209.00px;top:81px;width:68.00px;height:20px;background:rgb(253, 98, 94);"></div>
<div style="top:86.40px;font-size:12.9px;line-height:12.9px;color:#333;font-weight:normal;left:1210.5px;width:60px;text-align:right;">-26</div>
<div style="left:1277.00px;top:81px;width:67.00px;height:20px;background:rgb(253, 98, 94);"></div>
<div style="top:86.40px;font-size:12.9px;line-height:12.9px;color:#333;font-weight:normal;left:1277.5px;width:60px;text-align:right;">-25</div>
<div style="top:85.79px;font-size:13.5px;line-height:13.5px;color:#222;font-weight:bold;left:1340.2px;width:60px;text-align:right;">508</div>
<div style="left:6px;top:101px;width:525px;height:20px;background:#EEEEEE;"></div>
<div style="left:1344px;top:101px;width:63px;height:20px;background:#EEEEEE;"></div>
<div style="top:105.59px;font-size:13.3px;line-height:13.3px;color:#333;font-weight:normal;left:12.3px;">Lorie Ratte</div>
<div style="left:531.00px;top:101px;width:67.00px;height:20px;background:rgb(179, 222, 180);"></div>
<div style="top:106.53px;font-size:12.9px;line-height:12.9px;color:#333;font-weight:normal;left:531.5px;width:60px;text-align:right;">88</div>
<div style="left:598.00px;top:101px;width:70.70px;height:20px;background:rgb(186, 223, 178);"></div>
<div style="top:106.53px;font-size:12.9px;line-height:12.9px;color:#333;font-weight:normal;left:602.2px;width:60px;text-align:right;">80</div>
<div style="left:668.70px;top:101px;width:70.30px;height:20px;background:rgb(175, 222, 181);"></div>
<div style="top:106.53px;font-size:12.9px;line-height:12.9px;color:#333;font-weight:normal;left:672.5px;width:60px;text-align:right;">92</div>
<div style="left:739.00px;top:101px;width:68.00px;height:20px;background:rgb(242, 230, 160);"></div>
<div style="top:106.53px;font-size:12.9px;line-height:12.9px;color:#333;font-weight:normal;left:740.5px;width:60px;text-align:right;">20</div>
<div style="left:807.00px;top:101px;width:69.00px;height:20px;background:rgb(198, 224, 174);"></div>
<div style="top:106.53px;font-size:12.9px;line-height:12.9px;color:#333;font-weight:normal;left:809.5px;width:60px;text-align:right;">68</div>
<div style="left:876.00px;top:101px;width:64.00px;height:20px;background:rgb(186, 223, 178);"></div>
<div style="top:106.53px;font-size:12.9px;line-height:12.9px;color:#333;font-weight:normal;left:873.5px;width:60px;text-align:right;">80</div>
<div style="left:940.00px;top:101px;width:64.00px;height:20px;background:rgb(198, 224, 174);"></div>
<div style="top:106.53px;font-size:12.9px;line-height:12.9px;color:#333;font-weight:normal;left:937.5px;width:60px;text-align:right;">68</div>
<div style="left:1004.00px;top:101px;width:70.00px;height:20px;background:rgb(223, 228, 166);"></div>
<div style="top:106.53px;font-size:12.9px;line-height:12.9px;color:#333;font-weight:normal;left:1007.5px;width:60px;text-align:right;">40</div>
<div style="left:1074.00px;top:101px;width:63.00px;height:20px;background:rgb(220, 227, 167);"></div>
<div style="top:106.53px;font-size:12.9px;line-height:12.9px;color:#333;font-weight:normal;left:1070.5px;width:60px;text-align:right;">44</div>
<div style="left:1137.00px;top:101px;width:72.00px;height:20px;background:rgb(186, 223, 178);"></div>
<div style="top:106.53px;font-size:12.9px;line-height:12.9px;color:#333;font-weight:normal;left:1142.5px;width:60px;text-align:right;">80</div>
<div style="left:1209.00px;top:101px;width:68.00px;height:20px;background:rgb(186, 223, 178);"></div>
<div style="top:106.53px;font-size:12.9px;line-height:12.9px;color:#333;font-weight:normal;left:1210.5px;width:60px;text-align:right;">80</div>
<div style="left:1277.00px;top:101px;width:67.00px;height:20px;background:rgb(190, 223, 176);"></div>
<div style="top:106.53px;font-size:12.9px;line-height:12.9px;color:#333;font-weight:normal;left:1277.5px;width:60px;text-align:right;">76</div>
<div style="top:105.92px;font-size:13.5px;line-height:13.5px;color:#222;font-weight:bold;left:1340.2px;width:60px;text-align:right;">816</div>
<div style="left:6px;top:121px;width:525px;height:21px;background:#fff;"></div>
<div style="left:1344px;top:121px;width:63px;height:21px;background:#fff;"></div>
<div style="top:125.72px;font-size:13.3px;line-height:13.3px;color:#333;font-weight:normal;left:12.3px;">Maurice Hobbs</div>
<div style="left:531.00px;top:121px;width:67.00px;height:21px;background:rgb(104, 213, 204);"></div>
<div style="top:126.66px;font-size:12.9px;line-height:12.9px;color:#333;font-weight:normal;left:531.5px;width:60px;text-align:right;">176</div>
<div style="left:598.00px;top:121px;width:70.70px;height:21px;background:rgb(104, 213, 204);"></div>
<div style="top:126.66px;font-size:12.9px;line-height:12.9px;color:#333;font-weight:normal;left:602.2px;width:60px;text-align:right;">160</div>
<div style="left:668.70px;top:121px;width:70.30px;height:21px;background:rgb(104, 213, 204);"></div>
<div style="top:126.66px;font-size:12.9px;line-height:12.9px;color:#333;font-weight:normal;left:672.5px;width:60px;text-align:right;">184</div>
<div style="left:739.00px;top:121px;width:68.00px;height:21px;background:rgb(104, 213, 204);"></div>
<div style="top:126.66px;font-size:12.9px;line-height:12.9px;color:#333;font-weight:normal;left:740.5px;width:60px;text-align:right;">160</div>
<div style="left:807.00px;top:121px;width:69.00px;height:21px;background:rgb(104, 213, 204);"></div>
<div style="top:126.66px;font-size:12.9px;line-height:12.9px;color:#333;font-weight:normal;left:809.5px;width:60px;text-align:right;">184</div>
<div style="left:876.00px;top:121px;width:64.00px;height:21px;background:rgb(201, 225, 173);"></div>
<div style="top:126.66px;font-size:12.9px;line-height:12.9px;color:#333;font-weight:normal;left:873.5px;width:60px;text-align:right;">64</div>
<div style="left:940.00px;top:121px;width:64.00px;height:21px;background:rgb(250, 165, 124);"></div>
<div style="top:126.66px;font-size:12.9px;line-height:12.9px;color:#333;font-weight:normal;left:937.5px;width:60px;text-align:right;">0</div>
<div style="left:1004.00px;top:121px;width:70.00px;height:21px;background:rgb(250, 165, 124);"></div>
<div style="top:126.66px;font-size:12.9px;line-height:12.9px;color:#333;font-weight:normal;left:1007.5px;width:60px;text-align:right;">0</div>
<div style="left:1074.00px;top:121px;width:63.00px;height:21px;background:rgb(250, 165, 124);"></div>
<div style="top:126.66px;font-size:12.9px;line-height:12.9px;color:#333;font-weight:normal;left:1070.5px;width:60px;text-align:right;">0</div>
<div style="left:1137.00px;top:121px;width:72.00px;height:21px;background:rgb(250, 165, 124);"></div>
<div style="top:126.66px;font-size:12.9px;line-height:12.9px;color:#333;font-weight:normal;left:1142.5px;width:60px;text-align:right;">0</div>
<div style="left:1209.00px;top:121px;width:68.00px;height:21px;background:rgb(242, 230, 160);"></div>
<div style="top:126.66px;font-size:12.9px;line-height:12.9px;color:#333;font-weight:normal;left:1210.5px;width:60px;text-align:right;">20</div>
<div style="left:1277.00px;top:121px;width:67.00px;height:21px;background:rgb(222, 227, 166);"></div>
<div style="top:126.66px;font-size:12.9px;line-height:12.9px;color:#333;font-weight:normal;left:1277.5px;width:60px;text-align:right;">42</div>
<div style="top:126.05px;font-size:13.5px;line-height:13.5px;color:#222;font-weight:bold;left:1340.2px;width:60px;text-align:right;">990</div>
<div style="left:6px;top:142px;width:525px;height:20px;background:#EEEEEE;"></div>
<div style="left:1344px;top:142px;width:63px;height:20px;background:#EEEEEE;"></div>
<div style="top:145.85px;font-size:13.3px;line-height:13.3px;color:#333;font-weight:normal;left:12.3px;">Ann Miller</div>
<div style="left:531.00px;top:142px;width:67.00px;height:20px;background:rgb(179, 222, 180);"></div>
<div style="top:146.79px;font-size:12.9px;line-height:12.9px;color:#333;font-weight:normal;left:531.5px;width:60px;text-align:right;">88</div>
<div style="left:598.00px;top:142px;width:70.70px;height:20px;background:rgb(186, 223, 178);"></div>
<div style="top:146.79px;font-size:12.9px;line-height:12.9px;color:#333;font-weight:normal;left:602.2px;width:60px;text-align:right;">80</div>
<div style="left:668.70px;top:142px;width:70.30px;height:20px;background:rgb(175, 222, 181);"></div>
<div style="top:146.79px;font-size:12.9px;line-height:12.9px;color:#333;font-weight:normal;left:672.5px;width:60px;text-align:right;">92</div>
<div style="left:739.00px;top:142px;width:68.00px;height:20px;background:rgb(186, 223, 178);"></div>
<div style="top:146.79px;font-size:12.9px;line-height:12.9px;color:#333;font-weight:normal;left:740.5px;width:60px;text-align:right;">80</div>
<div style="left:807.00px;top:142px;width:69.00px;height:20px;background:rgb(175, 222, 181);"></div>
<div style="top:146.79px;font-size:12.9px;line-height:12.9px;color:#333;font-weight:normal;left:809.5px;width:60px;text-align:right;">92</div>
<div style="left:876.00px;top:142px;width:64.00px;height:20px;background:rgb(179, 222, 180);"></div>
<div style="top:146.79px;font-size:12.9px;line-height:12.9px;color:#333;font-weight:normal;left:873.5px;width:60px;text-align:right;">88</div>
<div style="left:940.00px;top:142px;width:64.00px;height:20px;background:rgb(183, 222, 179);"></div>
<div style="top:146.79px;font-size:12.9px;line-height:12.9px;color:#333;font-weight:normal;left:937.5px;width:60px;text-align:right;">84</div>
<div style="left:1004.00px;top:142px;width:70.00px;height:20px;background:rgb(175, 222, 181);"></div>
<div style="top:146.79px;font-size:12.9px;line-height:12.9px;color:#333;font-weight:normal;left:1007.5px;width:60px;text-align:right;">92</div>
<div style="left:1074.00px;top:142px;width:63.00px;height:20px;background:rgb(183, 222, 179);"></div>
<div style="top:146.79px;font-size:12.9px;line-height:12.9px;color:#333;font-weight:normal;left:1070.5px;width:60px;text-align:right;">84</div>
<div style="left:1137.00px;top:142px;width:72.00px;height:20px;background:rgb(179, 222, 180);"></div>
<div style="top:146.79px;font-size:12.9px;line-height:12.9px;color:#333;font-weight:normal;left:1142.5px;width:60px;text-align:right;">88</div>
<div style="left:1209.00px;top:142px;width:68.00px;height:20px;background:rgb(179, 222, 180);"></div>
<div style="top:146.79px;font-size:12.9px;line-height:12.9px;color:#333;font-weight:normal;left:1210.5px;width:60px;text-align:right;">88</div>
<div style="left:1277.00px;top:142px;width:67.00px;height:20px;background:rgb(183, 222, 179);"></div>
<div style="top:146.79px;font-size:12.9px;line-height:12.9px;color:#333;font-weight:normal;left:1277.5px;width:60px;text-align:right;">84</div>
<div style="top:146.18px;font-size:13.5px;line-height:13.5px;color:#222;font-weight:bold;left:1340.2px;width:60px;text-align:right;">1,040</div>
<div style="left:6px;top:162px;width:525px;height:20px;background:#fff;"></div>
<div style="left:1344px;top:162px;width:63px;height:20px;background:#fff;"></div>
<div style="top:165.98px;font-size:13.3px;line-height:13.3px;color:#333;font-weight:normal;left:12.3px;">Scotty Dowdell</div>
<div style="left:531.00px;top:162px;width:67.00px;height:20px;background:rgb(179, 222, 180);"></div>
<div style="top:166.92px;font-size:12.9px;line-height:12.9px;color:#333;font-weight:normal;left:531.5px;width:60px;text-align:right;">88</div>
<div style="left:598.00px;top:162px;width:70.70px;height:20px;background:rgb(186, 223, 178);"></div>
<div style="top:166.92px;font-size:12.9px;line-height:12.9px;color:#333;font-weight:normal;left:602.2px;width:60px;text-align:right;">80</div>
<div style="left:668.70px;top:162px;width:70.30px;height:20px;background:rgb(175, 222, 181);"></div>
<div style="top:166.92px;font-size:12.9px;line-height:12.9px;color:#333;font-weight:normal;left:672.5px;width:60px;text-align:right;">92</div>
<div style="left:739.00px;top:162px;width:68.00px;height:20px;background:rgb(186, 223, 178);"></div>
<div style="top:166.92px;font-size:12.9px;line-height:12.9px;color:#333;font-weight:normal;left:740.5px;width:60px;text-align:right;">80</div>
<div style="left:807.00px;top:162px;width:69.00px;height:20px;background:rgb(175, 222, 181);"></div>
<div style="top:166.92px;font-size:12.9px;line-height:12.9px;color:#333;font-weight:normal;left:809.5px;width:60px;text-align:right;">92</div>
<div style="left:876.00px;top:162px;width:64.00px;height:20px;background:rgb(179, 222, 180);"></div>
<div style="top:166.92px;font-size:12.9px;line-height:12.9px;color:#333;font-weight:normal;left:873.5px;width:60px;text-align:right;">88</div>
<div style="left:940.00px;top:162px;width:64.00px;height:20px;background:rgb(183, 222, 179);"></div>
<div style="top:166.92px;font-size:12.9px;line-height:12.9px;color:#333;font-weight:normal;left:937.5px;width:60px;text-align:right;">84</div>
<div style="left:1004.00px;top:162px;width:70.00px;height:20px;background:rgb(175, 222, 181);"></div>
<div style="top:166.92px;font-size:12.9px;line-height:12.9px;color:#333;font-weight:normal;left:1007.5px;width:60px;text-align:right;">92</div>
<div style="left:1074.00px;top:162px;width:63.00px;height:20px;background:rgb(183, 222, 179);"></div>
<div style="top:166.92px;font-size:12.9px;line-height:12.9px;color:#333;font-weight:normal;left:1070.5px;width:60px;text-align:right;">84</div>
<div style="left:1137.00px;top:162px;width:72.00px;height:20px;background:rgb(179, 222, 180);"></div>
<div style="top:166.92px;font-size:12.9px;line-height:12.9px;color:#333;font-weight:normal;left:1142.5px;width:60px;text-align:right;">88</div>
<div style="left:1209.00px;top:162px;width:68.00px;height:20px;background:rgb(179, 222, 180);"></div>
<div style="top:166.92px;font-size:12.9px;line-height:12.9px;color:#333;font-weight:normal;left:1210.5px;width:60px;text-align:right;">88</div>
<div style="left:1277.00px;top:162px;width:67.00px;height:20px;background:rgb(183, 222, 179);"></div>
<div style="top:166.92px;font-size:12.9px;line-height:12.9px;color:#333;font-weight:normal;left:1277.5px;width:60px;text-align:right;">84</div>
<div style="top:166.31px;font-size:13.5px;line-height:13.5px;color:#222;font-weight:bold;left:1340.2px;width:60px;text-align:right;">1,040</div>
<div style="left:6px;top:182px;width:525px;height:20px;background:#EEEEEE;"></div>
<div style="left:1344px;top:182px;width:63px;height:20px;background:#EEEEEE;"></div>
<div style="top:186.11px;font-size:13.3px;line-height:13.3px;color:#333;font-weight:normal;left:12.3px;">Teresa Douglas</div>
<div style="left:531.00px;top:182px;width:67.00px;height:20px;background:rgb(179, 222, 180);"></div>
<div style="top:187.05px;font-size:12.9px;line-height:12.9px;color:#333;font-weight:normal;left:531.5px;width:60px;text-align:right;">88</div>
<div style="left:598.00px;top:182px;width:70.70px;height:20px;background:rgb(186, 223, 178);"></div>
<div style="top:187.05px;font-size:12.9px;line-height:12.9px;color:#333;font-weight:normal;left:602.2px;width:60px;text-align:right;">80</div>
<div style="left:668.70px;top:182px;width:70.30px;height:20px;background:rgb(175, 222, 181);"></div>
<div style="top:187.05px;font-size:12.9px;line-height:12.9px;color:#333;font-weight:normal;left:672.5px;width:60px;text-align:right;">92</div>
<div style="left:739.00px;top:182px;width:68.00px;height:20px;background:rgb(186, 223, 178);"></div>
<div style="top:187.05px;font-size:12.9px;line-height:12.9px;color:#333;font-weight:normal;left:740.5px;width:60px;text-align:right;">80</div>
<div style="left:807.00px;top:182px;width:69.00px;height:20px;background:rgb(175, 222, 181);"></div>
<div style="top:187.05px;font-size:12.9px;line-height:12.9px;color:#333;font-weight:normal;left:809.5px;width:60px;text-align:right;">92</div>
<div style="left:876.00px;top:182px;width:64.00px;height:20px;background:rgb(179, 222, 180);"></div>
<div style="top:187.05px;font-size:12.9px;line-height:12.9px;color:#333;font-weight:normal;left:873.5px;width:60px;text-align:right;">88</div>
<div style="left:940.00px;top:182px;width:64.00px;height:20px;background:rgb(183, 222, 179);"></div>
<div style="top:187.05px;font-size:12.9px;line-height:12.9px;color:#333;font-weight:normal;left:937.5px;width:60px;text-align:right;">84</div>
<div style="left:1004.00px;top:182px;width:70.00px;height:20px;background:rgb(175, 222, 181);"></div>
<div style="top:187.05px;font-size:12.9px;line-height:12.9px;color:#333;font-weight:normal;left:1007.5px;width:60px;text-align:right;">92</div>
<div style="left:1074.00px;top:182px;width:63.00px;height:20px;background:rgb(183, 222, 179);"></div>
<div style="top:187.05px;font-size:12.9px;line-height:12.9px;color:#333;font-weight:normal;left:1070.5px;width:60px;text-align:right;">84</div>
<div style="left:1137.00px;top:182px;width:72.00px;height:20px;background:rgb(179, 222, 180);"></div>
<div style="top:187.05px;font-size:12.9px;line-height:12.9px;color:#333;font-weight:normal;left:1142.5px;width:60px;text-align:right;">88</div>
<div style="left:1209.00px;top:182px;width:68.00px;height:20px;background:rgb(179, 222, 180);"></div>
<div style="top:187.05px;font-size:12.9px;line-height:12.9px;color:#333;font-weight:normal;left:1210.5px;width:60px;text-align:right;">88</div>
<div style="left:1277.00px;top:182px;width:67.00px;height:20px;background:rgb(183, 222, 179);"></div>
<div style="top:187.05px;font-size:12.9px;line-height:12.9px;color:#333;font-weight:normal;left:1277.5px;width:60px;text-align:right;">84</div>
<div style="top:186.44px;font-size:13.5px;line-height:13.5px;color:#222;font-weight:bold;left:1340.2px;width:60px;text-align:right;">1,040</div>
<div style="left:6px;top:202px;width:525px;height:20px;background:#fff;"></div>
<div style="left:1344px;top:202px;width:63px;height:20px;background:#fff;"></div>
<div style="top:206.24px;font-size:13.3px;line-height:13.3px;color:#333;font-weight:normal;left:12.3px;">Site Grading Contractor</div>
<div style="left:531.00px;top:202px;width:67.00px;height:20px;background:rgb(104, 213, 204);"></div>
<div style="top:207.18px;font-size:12.9px;line-height:12.9px;color:#333;font-weight:normal;left:531.5px;width:60px;text-align:right;">176</div>
<div style="left:598.00px;top:202px;width:70.70px;height:20px;background:rgb(104, 213, 204);"></div>
<div style="top:207.18px;font-size:12.9px;line-height:12.9px;color:#333;font-weight:normal;left:602.2px;width:60px;text-align:right;">160</div>
<div style="left:668.70px;top:202px;width:70.30px;height:20px;background:rgb(104, 213, 204);"></div>
<div style="top:207.18px;font-size:12.9px;line-height:12.9px;color:#333;font-weight:normal;left:672.5px;width:60px;text-align:right;">184</div>
<div style="left:739.00px;top:202px;width:68.00px;height:20px;background:rgb(104, 213, 204);"></div>
<div style="top:207.18px;font-size:12.9px;line-height:12.9px;color:#333;font-weight:normal;left:740.5px;width:60px;text-align:right;">160</div>
<div style="left:807.00px;top:202px;width:69.00px;height:20px;background:rgb(104, 213, 204);"></div>
<div style="top:207.18px;font-size:12.9px;line-height:12.9px;color:#333;font-weight:normal;left:809.5px;width:60px;text-align:right;">184</div>
<div style="left:876.00px;top:202px;width:64.00px;height:20px;background:rgb(162, 220, 185);"></div>
<div style="top:207.18px;font-size:12.9px;line-height:12.9px;color:#333;font-weight:normal;left:873.5px;width:60px;text-align:right;">104</div>
<div style="left:940.00px;top:202px;width:64.00px;height:20px;background:rgb(252, 200, 140);"></div>
<div style="top:207.18px;font-size:12.9px;line-height:12.9px;color:#333;font-weight:normal;left:937.5px;width:60px;text-align:right;">6</div>
<div style="left:1004.00px;top:202px;width:70.00px;height:20px;background:rgb(201, 225, 173);"></div>
<div style="top:207.18px;font-size:12.9px;line-height:12.9px;color:#333;font-weight:normal;left:1007.5px;width:60px;text-align:right;">64</div>
<div style="left:1074.00px;top:202px;width:63.00px;height:20px;background:rgb(206, 225, 171);"></div>
<div style="top:207.18px;font-size:12.9px;line-height:12.9px;color:#333;font-weight:normal;left:1070.5px;width:60px;text-align:right;">59</div>
<div style="left:1137.00px;top:202px;width:72.00px;height:20px;background:rgb(203, 225, 172);"></div>
<div style="top:207.18px;font-size:12.9px;line-height:12.9px;color:#333;font-weight:normal;left:1142.5px;width:60px;text-align:right;">62</div>
<div style="left:1209.00px;top:202px;width:68.00px;height:20px;background:rgb(237, 229, 161);"></div>
<div style="top:207.18px;font-size:12.9px;line-height:12.9px;color:#333;font-weight:normal;left:1210.5px;width:60px;text-align:right;">25</div>
<div style="left:1277.00px;top:202px;width:67.00px;height:20px;background:rgb(250, 165, 124);"></div>
<div style="top:207.18px;font-size:12.9px;line-height:12.9px;color:#333;font-weight:normal;left:1277.5px;width:60px;text-align:right;">0</div>
<div style="top:206.57px;font-size:13.5px;line-height:13.5px;color:#222;font-weight:bold;left:1340.2px;width:60px;text-align:right;">1,183</div>
<div style="left:6px;top:222px;width:525px;height:21px;background:#EEEEEE;"></div>
<div style="left:1344px;top:222px;width:63px;height:21px;background:#EEEEEE;"></div>
<div style="top:226.37px;font-size:13.3px;line-height:13.3px;color:#333;font-weight:normal;left:12.3px;">Chaowalit Narkhirunkanok</div>
<div style="left:531.00px;top:222px;width:67.00px;height:21px;background:rgb(104, 213, 204);"></div>
<div style="top:227.31px;font-size:12.9px;line-height:12.9px;color:#333;font-weight:normal;left:531.5px;width:60px;text-align:right;">176</div>
<div style="left:598.00px;top:222px;width:70.70px;height:21px;background:rgb(104, 213, 204);"></div>
<div style="top:227.31px;font-size:12.9px;line-height:12.9px;color:#333;font-weight:normal;left:602.2px;width:60px;text-align:right;">160</div>
<div style="left:668.70px;top:222px;width:70.30px;height:21px;background:rgb(104, 213, 204);"></div>
<div style="top:227.31px;font-size:12.9px;line-height:12.9px;color:#333;font-weight:normal;left:672.5px;width:60px;text-align:right;">184</div>
<div style="left:739.00px;top:222px;width:68.00px;height:21px;background:rgb(104, 213, 204);"></div>
<div style="top:227.31px;font-size:12.9px;line-height:12.9px;color:#333;font-weight:normal;left:740.5px;width:60px;text-align:right;">160</div>
<div style="left:807.00px;top:222px;width:69.00px;height:21px;background:rgb(104, 213, 204);"></div>
<div style="top:227.31px;font-size:12.9px;line-height:12.9px;color:#333;font-weight:normal;left:809.5px;width:60px;text-align:right;">184</div>
<div style="left:876.00px;top:222px;width:64.00px;height:21px;background:rgb(104, 213, 204);"></div>
<div style="top:227.31px;font-size:12.9px;line-height:12.9px;color:#333;font-weight:normal;left:873.5px;width:60px;text-align:right;">176</div>
<div style="left:940.00px;top:222px;width:64.00px;height:21px;background:rgb(104, 213, 204);"></div>
<div style="top:227.31px;font-size:12.9px;line-height:12.9px;color:#333;font-weight:normal;left:937.5px;width:60px;text-align:right;">168</div>
<div style="left:1004.00px;top:222px;width:70.00px;height:21px;background:rgb(217, 194, 214);"></div>
<div style="left:1074.00px;top:222px;width:63.00px;height:21px;background:rgb(217, 194, 214);"></div>
<div style="left:1137.00px;top:222px;width:72.00px;height:21px;background:rgb(217, 194, 214);"></div>
<div style="left:1209.00px;top:222px;width:68.00px;height:21px;background:rgb(217, 194, 214);"></div>
<div style="left:1277.00px;top:222px;width:67.00px;height:21px;background:rgb(217, 194, 214);"></div>
<div style="top:226.70px;font-size:13.5px;line-height:13.5px;color:#222;font-weight:bold;left:1340.2px;width:60px;text-align:right;">1,208</div>
<div style="left:6px;top:243px;width:525px;height:20px;background:#fff;"></div>
<div style="left:1344px;top:243px;width:63px;height:20px;background:#fff;"></div>
<div style="top:246.50px;font-size:13.3px;line-height:13.3px;color:#333;font-weight:normal;left:12.3px;">Dana Krajcovicova</div>
<div style="left:531.00px;top:243px;width:67.00px;height:20px;background:rgb(104, 213, 204);"></div>
<div style="top:247.44px;font-size:12.9px;line-height:12.9px;color:#333;font-weight:normal;left:531.5px;width:60px;text-align:right;">176</div>
<div style="left:598.00px;top:243px;width:70.70px;height:20px;background:rgb(104, 213, 204);"></div>
<div style="top:247.44px;font-size:12.9px;line-height:12.9px;color:#333;font-weight:normal;left:602.2px;width:60px;text-align:right;">160</div>
<div style="left:668.70px;top:243px;width:70.30px;height:20px;background:rgb(104, 213, 204);"></div>
<div style="top:247.44px;font-size:12.9px;line-height:12.9px;color:#333;font-weight:normal;left:672.5px;width:60px;text-align:right;">184</div>
<div style="left:739.00px;top:243px;width:68.00px;height:20px;background:rgb(104, 213, 204);"></div>
<div style="top:247.44px;font-size:12.9px;line-height:12.9px;color:#333;font-weight:normal;left:740.5px;width:60px;text-align:right;">160</div>
<div style="left:807.00px;top:243px;width:69.00px;height:20px;background:rgb(104, 213, 204);"></div>
<div style="top:247.44px;font-size:12.9px;line-height:12.9px;color:#333;font-weight:normal;left:809.5px;width:60px;text-align:right;">184</div>
<div style="left:876.00px;top:243px;width:64.00px;height:20px;background:rgb(104, 213, 204);"></div>
<div style="top:247.44px;font-size:12.9px;line-height:12.9px;color:#333;font-weight:normal;left:873.5px;width:60px;text-align:right;">176</div>
<div style="left:940.00px;top:243px;width:64.00px;height:20px;background:rgb(104, 213, 204);"></div>
<div style="top:247.44px;font-size:12.9px;line-height:12.9px;color:#333;font-weight:normal;left:937.5px;width:60px;text-align:right;">168</div>
<div style="left:1004.00px;top:243px;width:70.00px;height:20px;background:rgb(217, 194, 214);"></div>
<div style="left:1074.00px;top:243px;width:63.00px;height:20px;background:rgb(217, 194, 214);"></div>
<div style="left:1137.00px;top:243px;width:72.00px;height:20px;background:rgb(217, 194, 214);"></div>
<div style="left:1209.00px;top:243px;width:68.00px;height:20px;background:rgb(217, 194, 214);"></div>
<div style="left:1277.00px;top:243px;width:67.00px;height:20px;background:rgb(217, 194, 214);"></div>
<div style="top:246.83px;font-size:13.5px;line-height:13.5px;color:#222;font-weight:bold;left:1340.2px;width:60px;text-align:right;">1,208</div>
<div style="left:6px;top:263px;width:525px;height:20px;background:#EEEEEE;"></div>
<div style="left:1344px;top:263px;width:63px;height:20px;background:#EEEEEE;"></div>
<div style="top:266.63px;font-size:13.3px;line-height:13.3px;color:#333;font-weight:normal;left:12.3px;">Harrison Gillum</div>
<div style="left:531.00px;top:263px;width:67.00px;height:20px;background:rgb(104, 213, 204);"></div>
<div style="top:267.57px;font-size:12.9px;line-height:12.9px;color:#333;font-weight:normal;left:531.5px;width:60px;text-align:right;">176</div>
<div style="left:598.00px;top:263px;width:70.70px;height:20px;background:rgb(104, 213, 204);"></div>
<div style="top:267.57px;font-size:12.9px;line-height:12.9px;color:#333;font-weight:normal;left:602.2px;width:60px;text-align:right;">160</div>
<div style="left:668.70px;top:263px;width:70.30px;height:20px;background:rgb(104, 213, 204);"></div>
<div style="top:267.57px;font-size:12.9px;line-height:12.9px;color:#333;font-weight:normal;left:672.5px;width:60px;text-align:right;">184</div>
<div style="left:739.00px;top:263px;width:68.00px;height:20px;background:rgb(104, 213, 204);"></div>
<div style="top:267.57px;font-size:12.9px;line-height:12.9px;color:#333;font-weight:normal;left:740.5px;width:60px;text-align:right;">160</div>
<div style="left:807.00px;top:263px;width:69.00px;height:20px;background:rgb(104, 213, 204);"></div>
<div style="top:267.57px;font-size:12.9px;line-height:12.9px;color:#333;font-weight:normal;left:809.5px;width:60px;text-align:right;">184</div>
<div style="left:876.00px;top:263px;width:64.00px;height:20px;background:rgb(104, 213, 204);"></div>
<div style="top:267.57px;font-size:12.9px;line-height:12.9px;color:#333;font-weight:normal;left:873.5px;width:60px;text-align:right;">176</div>
<div style="left:940.00px;top:263px;width:64.00px;height:20px;background:rgb(104, 213, 204);"></div>
<div style="top:267.57px;font-size:12.9px;line-height:12.9px;color:#333;font-weight:normal;left:937.5px;width:60px;text-align:right;">168</div>
<div style="left:1004.00px;top:263px;width:70.00px;height:20px;background:rgb(217, 194, 214);"></div>
<div style="left:1074.00px;top:263px;width:63.00px;height:20px;background:rgb(217, 194, 214);"></div>
<div style="left:1137.00px;top:263px;width:72.00px;height:20px;background:rgb(217, 194, 214);"></div>
<div style="left:1209.00px;top:263px;width:68.00px;height:20px;background:rgb(217, 194, 214);"></div>
<div style="left:1277.00px;top:263px;width:67.00px;height:20px;background:rgb(217, 194, 214);"></div>
<div style="top:266.96px;font-size:13.5px;line-height:13.5px;color:#222;font-weight:bold;left:1340.2px;width:60px;text-align:right;">1,208</div>
<div style="left:6px;top:283px;width:525px;height:20px;background:#fff;"></div>
<div style="left:1344px;top:283px;width:63px;height:20px;background:#fff;"></div>
<div style="top:286.76px;font-size:13.3px;line-height:13.3px;color:#333;font-weight:normal;left:12.3px;">Joel Rodriquez</div>
<div style="left:531.00px;top:283px;width:67.00px;height:20px;background:rgb(104, 213, 204);"></div>
<div style="top:287.70px;font-size:12.9px;line-height:12.9px;color:#333;font-weight:normal;left:531.5px;width:60px;text-align:right;">176</div>
<div style="left:598.00px;top:283px;width:70.70px;height:20px;background:rgb(104, 213, 204);"></div>
<div style="top:287.70px;font-size:12.9px;line-height:12.9px;color:#333;font-weight:normal;left:602.2px;width:60px;text-align:right;">160</div>
<div style="left:668.70px;top:283px;width:70.30px;height:20px;background:rgb(104, 213, 204);"></div>
<div style="top:287.70px;font-size:12.9px;line-height:12.9px;color:#333;font-weight:normal;left:672.5px;width:60px;text-align:right;">184</div>
<div style="left:739.00px;top:283px;width:68.00px;height:20px;background:rgb(104, 213, 204);"></div>
<div style="top:287.70px;font-size:12.9px;line-height:12.9px;color:#333;font-weight:normal;left:740.5px;width:60px;text-align:right;">160</div>
<div style="left:807.00px;top:283px;width:69.00px;height:20px;background:rgb(104, 213, 204);"></div>
<div style="top:287.70px;font-size:12.9px;line-height:12.9px;color:#333;font-weight:normal;left:809.5px;width:60px;text-align:right;">184</div>
<div style="left:876.00px;top:283px;width:64.00px;height:20px;background:rgb(104, 213, 204);"></div>
<div style="top:287.70px;font-size:12.9px;line-height:12.9px;color:#333;font-weight:normal;left:873.5px;width:60px;text-align:right;">176</div>
<div style="left:940.00px;top:283px;width:64.00px;height:20px;background:rgb(104, 213, 204);"></div>
<div style="top:287.70px;font-size:12.9px;line-height:12.9px;color:#333;font-weight:normal;left:937.5px;width:60px;text-align:right;">168</div>
<div style="left:1004.00px;top:283px;width:70.00px;height:20px;background:rgb(217, 194, 214);"></div>
<div style="left:1074.00px;top:283px;width:63.00px;height:20px;background:rgb(217, 194, 214);"></div>
<div style="left:1137.00px;top:283px;width:72.00px;height:20px;background:rgb(217, 194, 214);"></div>
<div style="left:1209.00px;top:283px;width:68.00px;height:20px;background:rgb(217, 194, 214);"></div>
<div style="left:1277.00px;top:283px;width:67.00px;height:20px;background:rgb(217, 194, 214);"></div>
<div style="top:287.09px;font-size:13.5px;line-height:13.5px;color:#222;font-weight:bold;left:1340.2px;width:60px;text-align:right;">1,208</div>
<div style="left:6px;top:303px;width:525px;height:20px;background:#EEEEEE;"></div>
<div style="left:1344px;top:303px;width:63px;height:20px;background:#EEEEEE;"></div>
<div style="top:306.89px;font-size:13.3px;line-height:13.3px;color:#333;font-weight:normal;left:12.3px;">Madge Nash</div>
<div style="left:531.00px;top:303px;width:67.00px;height:20px;background:rgb(104, 213, 204);"></div>
<div style="top:307.83px;font-size:12.9px;line-height:12.9px;color:#333;font-weight:normal;left:531.5px;width:60px;text-align:right;">176</div>
<div style="left:598.00px;top:303px;width:70.70px;height:20px;background:rgb(104, 213, 204);"></div>
<div style="top:307.83px;font-size:12.9px;line-height:12.9px;color:#333;font-weight:normal;left:602.2px;width:60px;text-align:right;">160</div>
<div style="left:668.70px;top:303px;width:70.30px;height:20px;background:rgb(104, 213, 204);"></div>
<div style="top:307.83px;font-size:12.9px;line-height:12.9px;color:#333;font-weight:normal;left:672.5px;width:60px;text-align:right;">184</div>
<div style="left:739.00px;top:303px;width:68.00px;height:20px;background:rgb(104, 213, 204);"></div>
<div style="top:307.83px;font-size:12.9px;line-height:12.9px;color:#333;font-weight:normal;left:740.5px;width:60px;text-align:right;">160</div>
<div style="left:807.00px;top:303px;width:69.00px;height:20px;background:rgb(104, 213, 204);"></div>
<div style="top:307.83px;font-size:12.9px;line-height:12.9px;color:#333;font-weight:normal;left:809.5px;width:60px;text-align:right;">184</div>
<div style="left:876.00px;top:303px;width:64.00px;height:20px;background:rgb(104, 213, 204);"></div>
<div style="top:307.83px;font-size:12.9px;line-height:12.9px;color:#333;font-weight:normal;left:873.5px;width:60px;text-align:right;">176</div>
<div style="left:940.00px;top:303px;width:64.00px;height:20px;background:rgb(104, 213, 204);"></div>
<div style="top:307.83px;font-size:12.9px;line-height:12.9px;color:#333;font-weight:normal;left:937.5px;width:60px;text-align:right;">168</div>
<div style="left:1004.00px;top:303px;width:70.00px;height:20px;background:rgb(217, 194, 214);"></div>
<div style="left:1074.00px;top:303px;width:63.00px;height:20px;background:rgb(217, 194, 214);"></div>
<div style="left:1137.00px;top:303px;width:72.00px;height:20px;background:rgb(217, 194, 214);"></div>
<div style="left:1209.00px;top:303px;width:68.00px;height:20px;background:rgb(217, 194, 214);"></div>
<div style="left:1277.00px;top:303px;width:67.00px;height:20px;background:rgb(217, 194, 214);"></div>
<div style="top:307.22px;font-size:13.5px;line-height:13.5px;color:#222;font-weight:bold;left:1340.2px;width:60px;text-align:right;">1,208</div>
</div>
<div style="top:787.87px;font-size:13.5px;line-height:13.5px;color:#222;font-weight:bold;left:12.3px;">Total</div>
<div style="top:787.87px;font-size:13.5px;line-height:13.5px;color:#222;font-weight:bold;left:521.5px;width:70px;text-align:right;">29,918</div>
<div style="top:787.87px;font-size:13.5px;line-height:13.5px;color:#222;font-weight:bold;left:592.2px;width:70px;text-align:right;">27,104</div>
<div style="top:787.87px;font-size:13.5px;line-height:13.5px;color:#222;font-weight:bold;left:662.5px;width:70px;text-align:right;">31,170</div>
<div style="top:787.87px;font-size:13.5px;line-height:13.5px;color:#222;font-weight:bold;left:730.5px;width:70px;text-align:right;">26,755</div>
<div style="top:787.87px;font-size:13.5px;line-height:13.5px;color:#222;font-weight:bold;left:799.5px;width:70px;text-align:right;">30,667</div>
<div style="top:787.87px;font-size:13.5px;line-height:13.5px;color:#222;font-weight:bold;left:863.5px;width:70px;text-align:right;">28,107</div>
<div style="top:787.87px;font-size:13.5px;line-height:13.5px;color:#222;font-weight:bold;left:927.5px;width:70px;text-align:right;">26,725</div>
<div style="top:787.87px;font-size:13.5px;line-height:13.5px;color:#222;font-weight:bold;left:997.5px;width:70px;text-align:right;">27,691</div>
<div style="top:787.87px;font-size:13.5px;line-height:13.5px;color:#222;font-weight:bold;left:1060.5px;width:70px;text-align:right;">25,419</div>
<div style="top:787.87px;font-size:13.5px;line-height:13.5px;color:#222;font-weight:bold;left:1132.5px;width:70px;text-align:right;">26,668</div>
<div style="top:787.87px;font-size:13.5px;line-height:13.5px;color:#222;font-weight:bold;left:1200.5px;width:70px;text-align:right;">26,352</div>
<div style="top:787.87px;font-size:13.5px;line-height:13.5px;color:#222;font-weight:bold;left:1267.5px;width:70px;text-align:right;">25,272</div>
<div style="top:787.87px;font-size:13.5px;line-height:13.5px;color:#222;font-weight:bold;left:1330.2px;width:70px;text-align:right;">331,848</div>
<div style="left:530px;top:464px;width:1px;height:340px;background:#1AAE9F;"></div>
<div style="left:1421px;top:435px;width:10px;height:359px;background:#F0F0F0;"></div>
<div style="left:1421px;top:465px;width:10px;height:48px;background:#C8C8C8;"></div>
<svg style="left:1421px;top:445px" width="10" height="8"><polyline points="1.5,7 5,3.5 8.5,7" fill="none" stroke="#444" stroke-width="1"/></svg>
<svg style="left:1421px;top:775px" width="10" height="8"><polyline points="1.5,2 5,5.5 8.5,2" fill="none" stroke="#444" stroke-width="1"/></svg>
</body></html>
